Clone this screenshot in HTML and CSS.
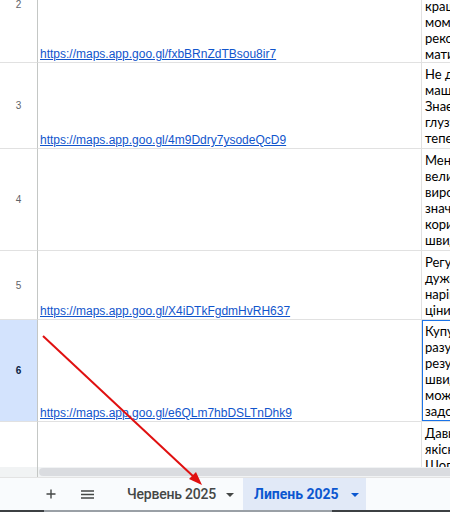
FILE: index.html
```html
<!DOCTYPE html>
<html lang="uk">
<head>
<meta charset="utf-8">
<title>Sheet</title>
<link rel="stylesheet" href="styles.css">
</head>
<body>
<div class="app">
  <div class="grid-area">
    <div class="sheet">
      <div class="rh">2</div>
      <div class="cb"><a href="#">https://maps.app.goo.gl/fxbBRnZdTBsou8ir7</a></div>
      <div class="cc"><span>Найкраще місце</span><span>щоб провести</span><span>відпочинок</span><span>кращого</span><span>моменту</span><span>рекомендую</span><span>матимете</span></div>

      <div class="rh">3</div>
      <div class="cb"><a href="#">https://maps.app.goo.gl/4m9Ddry7ysodeQcD9</a></div>
      <div class="cc"><span>Не думав</span><span>машиною</span><span>Знаєте</span><span>глузуванням</span><span>тепер</span></div>

      <div class="rh">4</div>
      <div class="cb"></div>
      <div class="cc"><span>Менеджер</span><span>великий</span><span>виробник</span><span>значно</span><span>користь</span><span>швидко</span></div>

      <div class="rh">5</div>
      <div class="cb"><a href="#">https://maps.app.goo.gl/X4iDTkFgdmHvRH637</a></div>
      <div class="cc"><span>Регулярно</span><span>дуже</span><span>нарікань</span><span>ціни на</span></div>

      <div class="rh sel">6</div>
      <div class="cb"><a href="#">https://maps.app.goo.gl/e6QLm7hbDSLTnDhk9</a></div>
      <div class="cc active"><span>Купую</span><span>разу</span><span>результат</span><span>швидко</span><span>можна</span><span>задоволена</span></div>

      <div class="rh"></div>
      <div class="cb"></div>
      <div class="cc"><span>Давно</span><span>якісно</span><span>Шопінг</span></div>
    </div>
  </div>
  <div class="hscroll"><div class="thumb"></div></div>
  <div class="tabbar">
    <svg class="ico-plus" width="10" height="10" viewBox="0 0 10 10"><path d="M5 0.5V9.5M0.5 5H9.5" stroke="#444746" stroke-width="1.4" fill="none"/></svg>
    <svg class="ico-menu" width="13" height="9" viewBox="0 0 13 9"><path d="M0 1H13M0 4.5H13M0 8H13" stroke="#444746" stroke-width="1.4" fill="none"/></svg>
    <div class="tab first"><span>Червень 2025</span><i class="tri"></i></div>
    <div class="tab on"><span>Липень 2025</span><i class="tri"></i></div>
  </div>
  <div class="edge"><div class="e1"></div><div class="e2"></div><div class="e3"></div></div>
  <svg class="arrow" width="450" height="512" viewBox="0 0 450 512">
    <line x1="43" y1="336" x2="195" y2="478" stroke="#e01010" stroke-width="2"/>
    <polygon points="202,485 189,479 196,472" fill="#e01010"/>
  </svg>
</div>
</body>
</html>
```
FILE: styles.css
```css
html, body { margin: 0; padding: 0; }
body { width: 450px; height: 512px; overflow: hidden; background: #fff; font-family: Arial, "Liberation Sans", sans-serif; }
.app { position: relative; width: 450px; height: 512px; display: flex; flex-direction: column; }
.grid-area { height: 467px; overflow: hidden; flex: none; }
.sheet {
  margin-top: -53px;
  display: grid;
  grid-template-columns: 38px 384px 300px;
  grid-template-rows: 116px 86px 102px 69px 102px 80px;
}
.rh {
  border-right: 1px solid #c4c7c5;
  border-bottom: 1px solid #e1e1e1;
  display: flex; align-items: center; justify-content: center;
  font-size: 10px; color: #5f6368;
  font-family: Arial, "Liberation Sans", sans-serif;
}
.rh.sel { background: #d3e3fd; color: #0b1f44; font-weight: bold; }
.cb {
  border-right: 1px solid #e1e1e1;
  border-bottom: 1px solid #e1e1e1;
  display: flex; align-items: flex-end;
  padding: 0 2px 1px 2px;
}
.cb a { color: #1155cc; text-decoration: underline; font-size: 12px; line-height: 14px; font-family: Arial, "Liberation Sans", sans-serif; white-space: nowrap; }
.cc {
  border-bottom: 1px solid #e1e1e1;
  padding: 3px 3px 0 3px;
  display: flex; flex-direction: column;
  font-family: Lato, "Open Sans", sans-serif;
  font-size: 13px; line-height: 16px; color: #000;
  white-space: nowrap; overflow: hidden;
  position: relative;
}
.cc.active::after {
  content: ""; position: absolute; left: -1px; top: -1px; right: 0; bottom: -1px;
  border: 2px solid #1a73e8;
}
.hscroll { height: 10px; background: #f1f3f4; flex: none; display: flex; align-items: center; padding-left: 39px; position: relative; }
.hscroll::before { content: ""; position: absolute; left: 37px; top: 0; bottom: 0; width: 1px; background: #c4c7c5; }
.thumb { flex: 1; height: 8px; background: #dadce0; border-radius: 4px 0 0 4px; }
.tabbar {
  height: 32px; flex: none;
  border-top: 1px solid #e3e3e3;
  background: #f9fbfd;
  display: flex; align-items: center;
  padding-left: 46px;
  font-family: Roboto, "Noto Sans", sans-serif;
}
.ico-plus, .ico-menu { flex: none; }
.ico-menu { margin-left: 25px; }
.tab {
  height: 32px; display: flex; align-items: center; flex: none;
  font-size: 14px; font-weight: 500; color: #444746;
  white-space: nowrap; box-sizing: border-box;
}
.tab.first { margin-left: 19px; padding-left: 14px; width: 130px; letter-spacing: -0.2px; }
.tab.on { background: #e1e9f7; color: #0b57d0; font-weight: bold; padding-left: 11px; width: 123px; }
.tri { display: inline-block; width: 0; height: 0; border-left: 4px solid transparent; border-right: 4px solid transparent; border-top: 4px solid #444746; margin-left: 10px; margin-top: 1px; }
.tab.on .tri { border-top-color: #0b57d0; margin-left: 12px; }
.edge { height: 2px; display: flex; flex: none; }
.e1 { width: 44px; background: #3c4043; }
.e2 { width: 288px; background: #9aa0a6; }
.e3 { flex: 1; background: #3c4043; }
.arrow { position: absolute; left: 0; top: 0; pointer-events: none; }
```
